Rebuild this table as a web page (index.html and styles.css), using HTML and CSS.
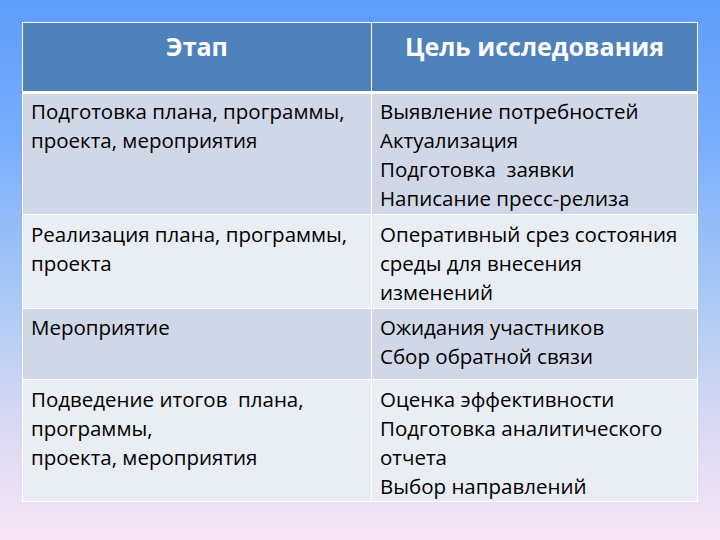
FILE: index.html
```html
<!DOCTYPE html>
<html lang="ru">
<head>
<meta charset="utf-8">
<link rel="stylesheet" href="styles.css">
</head>
<body>
<div class="slide">
  <div class="table">
    <div class="cell head">Этап</div>
    <div class="cell head">Цель исследования</div>

    <div class="cell odd r1">Подготовка плана, программы,<br>проекта, мероприятия</div>
    <div class="cell odd r1">Выявление потребностей<br>Актуализация<br>Подготовка&nbsp; заявки<br>Написание пресс-релиза</div>

    <div class="cell even r2">Реализация плана, программы,<br>проекта</div>
    <div class="cell even r2">Оперативный срез состояния<br>среды для внесения<br>изменений</div>

    <div class="cell odd r3">Мероприятие</div>
    <div class="cell odd r3">Ожидания участников<br>Сбор обратной связи</div>

    <div class="cell even r4">Подведение итогов&nbsp; плана,<br>программы,<br>проекта, мероприятия</div>
    <div class="cell even r4">Оценка эффективности<br>Подготовка аналитического<br>отчета<br>Выбор направлений</div>
  </div>
</div>
</body>
</html>
```
FILE: styles.css
```css
html, body {
  margin: 0;
  padding: 0;
}
.slide {
  width: 720px;
  height: 540px;
  box-sizing: border-box;
  padding: 22px 0 0 22px;
  background: linear-gradient(to bottom, #5d9dfc 0%, #78adfb 25%, #a9c9f4 55%, #dcdaf3 80%, #f7e4f4 100%);
  font-family: "Open Sans", "Noto Sans", sans-serif;
}
.table {
  width: 676px;
  box-sizing: border-box;
  display: grid;
  grid-template-columns: 348px 325px;
  grid-template-rows: 70px 120px 93px 70px 121px;
  column-gap: 1px;
  row-gap: 1px;
  padding: 1px;
  background: #ffffff;
}
.cell {
  padding: 3px 8px 0 8px;
  font-size: 20.5px;
  line-height: 29px;
  color: #000;
  white-space: nowrap;
}
.head {
  background: #4f81bd;
  color: #fff;
  font-weight: bold;
  font-size: 25px;
  text-align: center;
  padding-top: 9px;
  margin-bottom: 2px;
}
.odd { background: #d0d8e8; }
.even { background: #e9edf4; }
.r2, .r4 { padding-top: 5px; }
.r3 { padding-top: 4px; }
```
